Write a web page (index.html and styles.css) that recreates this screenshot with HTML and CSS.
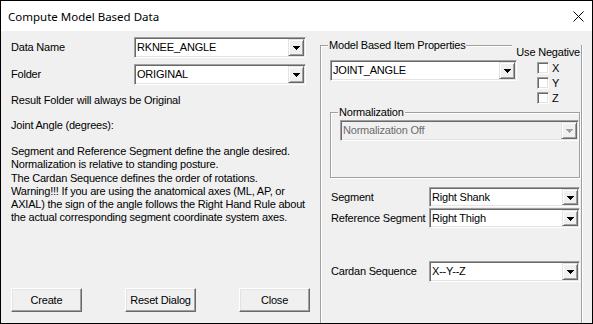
FILE: index.html
```html
<!DOCTYPE html>
<html>
<head>
<meta charset="utf-8">
<link rel="stylesheet" href="styles.css">
</head>
<body>
<div class="window">
  <div class="titlebar">
    <span class="title">Compute Model Based Data</span>
    <svg class="close" width="11" height="11" viewBox="0 0 11 11"><path d="M0.5 0.5 L10.5 10.5 M10.5 0.5 L0.5 10.5" stroke="#000" stroke-width="1" fill="none"/></svg>
  </div>
  <div class="content">
    <div class="left">
      <div class="row">
        <span class="lbl">Data Name</span>
        <div class="combo w172"><span class="val">RKNEE_ANGLE</span><span class="dd"><svg width="7" height="4" viewBox="0 0 7 4" shape-rendering="crispEdges"><rect x="0" y="0" width="7" height="1"/><rect x="1" y="1" width="5" height="1"/><rect x="2" y="2" width="3" height="1"/><rect x="3" y="3" width="1" height="1"/></svg></span></div>
      </div>
      <div class="row">
        <span class="lbl">Folder</span>
        <div class="combo w172"><span class="val">ORIGINAL</span><span class="dd"><svg width="7" height="4" viewBox="0 0 7 4" shape-rendering="crispEdges"><rect x="0" y="0" width="7" height="1"/><rect x="1" y="1" width="5" height="1"/><rect x="2" y="2" width="3" height="1"/><rect x="3" y="3" width="1" height="1"/></svg></span></div>
      </div>
      <p class="t-result">Result Folder will always be Original</p>
      <p class="t-joint">Joint Angle (degrees):</p>
      <p class="t-para">Segment and Reference Segment define the angle desired.<br>Normalization is relative to standing posture.<br>The Cardan Sequence defines the order of rotations.<br>Warning!!! If you are using the anatomical axes (ML, AP, or<br>AXIAL) the sign of the angle follows the Right Hand Rule about<br>the actual corresponding segment coordinate system axes.</p>
      <div class="buttons">
        <button class="push">Create</button>
        <button class="push">Reset Dialog</button>
        <button class="push">Close</button>
      </div>
    </div>
    <div class="right">
      <div class="group main">
        <span class="legend">Model Based Item Properties</span>
        <span class="useneg">Use Negative</span>
        <div class="toprow">
          <div class="combo w187"><span class="val">JOINT_ANGLE</span><span class="dd"><svg width="7" height="4" viewBox="0 0 7 4" shape-rendering="crispEdges"><rect x="0" y="0" width="7" height="1"/><rect x="1" y="1" width="5" height="1"/><rect x="2" y="2" width="3" height="1"/><rect x="3" y="3" width="1" height="1"/></svg></span></div>
          <div class="checks">
            <div class="chk"><span class="cb"></span><span>X</span></div>
            <div class="chk"><span class="cb"></span><span>Y</span></div>
            <div class="chk"><span class="cb"></span><span>Z</span></div>
          </div>
        </div>
        <div class="group norm">
          <span class="legend">Normalization</span>
          <div class="combo disabled w239"><span class="val">Normalization Off</span><span class="dd"><svg width="7" height="4" viewBox="0 0 7 4" shape-rendering="crispEdges"><rect x="0" y="0" width="7" height="1"/><rect x="1" y="1" width="5" height="1"/><rect x="2" y="2" width="3" height="1"/><rect x="3" y="3" width="1" height="1"/></svg></span></div>
        </div>
        <div class="srow seg">
          <span class="slbl">Segment</span>
          <div class="combo w151 h20"><span class="val">Right Shank</span><span class="dd"><svg width="7" height="4" viewBox="0 0 7 4" shape-rendering="crispEdges"><rect x="0" y="0" width="7" height="1"/><rect x="1" y="1" width="5" height="1"/><rect x="2" y="2" width="3" height="1"/><rect x="3" y="3" width="1" height="1"/></svg></span></div>
        </div>
        <div class="srow ref">
          <span class="slbl">Reference Segment</span>
          <div class="combo w151 h20"><span class="val">Right Thigh</span><span class="dd"><svg width="7" height="4" viewBox="0 0 7 4" shape-rendering="crispEdges"><rect x="0" y="0" width="7" height="1"/><rect x="1" y="1" width="5" height="1"/><rect x="2" y="2" width="3" height="1"/><rect x="3" y="3" width="1" height="1"/></svg></span></div>
        </div>
        <div class="srow cardan">
          <span class="slbl">Cardan Sequence</span>
          <div class="combo w151"><span class="val">X--Y--Z</span><span class="dd"><svg width="7" height="4" viewBox="0 0 7 4" shape-rendering="crispEdges"><rect x="0" y="0" width="7" height="1"/><rect x="1" y="1" width="5" height="1"/><rect x="2" y="2" width="3" height="1"/><rect x="3" y="3" width="1" height="1"/></svg></span></div>
        </div>
      </div>
    </div>
  </div>
</div>
</body>
</html>
```

FILE: styles.css
```css
* { box-sizing: border-box; }
html, body { margin: 0; padding: 0; }
body {
  width: 593px;
  height: 324px;
  overflow: hidden;
  font-family: "Liberation Sans", Arial, sans-serif;
  font-size: 11px;
  line-height: 13px;
  letter-spacing: -0.2px;
  color: #000;
}
.window {
  width: 593px;
  height: 324px;
  border: 1px solid #000;
  background: #f0f0f0;
  display: flex;
  flex-direction: column;
}
.titlebar {
  height: 30px;
  flex: none;
  background: #fff;
  display: flex;
  align-items: center;
  justify-content: space-between;
  padding: 0 8px 0 7px;
  font-family: "Noto Sans", "Segoe UI", sans-serif;
  font-size: 11.5px;
  letter-spacing: 0;
}
.close { display: block; }
.content {
  flex: 1;
  display: flex;
  overflow: hidden;
}
.left {
  width: 319px;
  flex: none;
  padding: 6px 0 11px 10px;
  display: flex;
  flex-direction: column;
}
.row {
  display: flex;
  align-items: center;
  height: 21px;
}
.row + .row { margin-top: 6px; }
.lbl { width: 123px; }
p { margin: 0; white-space: nowrap; }
.t-result { margin-top: 9px; }
.t-joint { margin-top: 12px; }
.t-para { margin-top: 13px; line-height: 13.3px; }
.buttons {
  margin-top: auto;
  display: flex;
  gap: 43px;
}
.push {
  width: 71px;
  height: 24px;
  padding: 0;
  font: inherit;
  letter-spacing: inherit;
  color: #000;
  background: #f0f0f0;
  border: 1px solid;
  border-color: #fff #696969 #696969 #fff;
  box-shadow: inset -1px -1px 0 #a0a0a0, inset 1px 1px 0 #e3e3e3;
}

/* combo box */
.combo {
  height: 21px;
  flex: none;
  display: flex;
  background: #fff;
  padding: 1px;
  border: 1px solid;
  border-color: #a0a0a0 #fff #fff #a0a0a0;
  box-shadow: inset 1px 1px 0 #696969, inset -1px -1px 0 #e3e3e3;
}
.combo .val {
  flex: 1;
  padding-left: 1px;
  display: flex;
  align-items: center;
  white-space: nowrap;
  overflow: hidden;
}
.combo .dd {
  width: 16px;
  flex: none;
  background: #f0f0f0;
  border: 1px solid;
  border-color: #e3e3e3 #696969 #696969 #e3e3e3;
  box-shadow: inset 1px 1px 0 #fff, inset -1px -1px 0 #a0a0a0;
  display: flex;
  align-items: center;
  justify-content: center;
}
.combo .dd svg { display: block; fill: #000; margin-top: 1px; }
.combo.disabled { background: #f0f0f0; }
.combo.disabled .val { color: #6d6d6d; }
.combo.disabled .dd svg { fill: #a0a0a0; }
.w172 { width: 172px; }
.w187 { width: 187px; }
.w239 { width: 239px; }
.w151 { width: 151px; }
.h20 { height: 20px; }

/* right side */
.right {
  width: 271px;
  flex: none;
  padding-top: 14px;
}
.group {
  position: relative;
  border: 1px solid #a0a0a0;
  box-shadow: inset 1px 1px 0 #fff, 1px 1px 0 #fff;
}
.legend {
  position: absolute;
  top: -7px;
  left: 7px;
  padding: 0 1px;
  background: #f0f0f0;
  white-space: nowrap;
}
.main {
  width: 262px;
  height: 300px;
  padding-left: 9px;
}
.useneg {
  position: absolute;
  top: -1px;
  left: 191px;
  right: 0;
  height: 14px;
  padding-top: 1px;
  text-align: right;
  padding-right: 1px;
  background: #f0f0f0;
  white-space: nowrap;
}
.toprow {
  display: flex;
  margin-top: 14px;
}
.checks {
  margin-left: 20px;
  margin-top: 2px;
}
.chk {
  display: flex;
  align-items: center;
  height: 12px;
  margin-bottom: 3px;
}
.cb {
  width: 12px;
  height: 12px;
  margin-right: 3px;
  background: #fff;
  border: 1px solid;
  border-color: #a0a0a0 #fff #fff #a0a0a0;
  box-shadow: inset 1px 1px 0 #696969, inset -1px -1px 0 #e3e3e3;
}
.norm {
  width: 250px;
  height: 66px;
  margin-top: 5px;
  padding: 7px 0 0 9px;
}
.srow {
  display: flex;
  align-items: center;
}
.slbl {
  width: 99px;
  padding-left: 1px;
  white-space: nowrap;
}
.seg { margin-top: 9px; }
.ref { margin-top: 1px; }
.cardan { margin-top: 33px; }
```
